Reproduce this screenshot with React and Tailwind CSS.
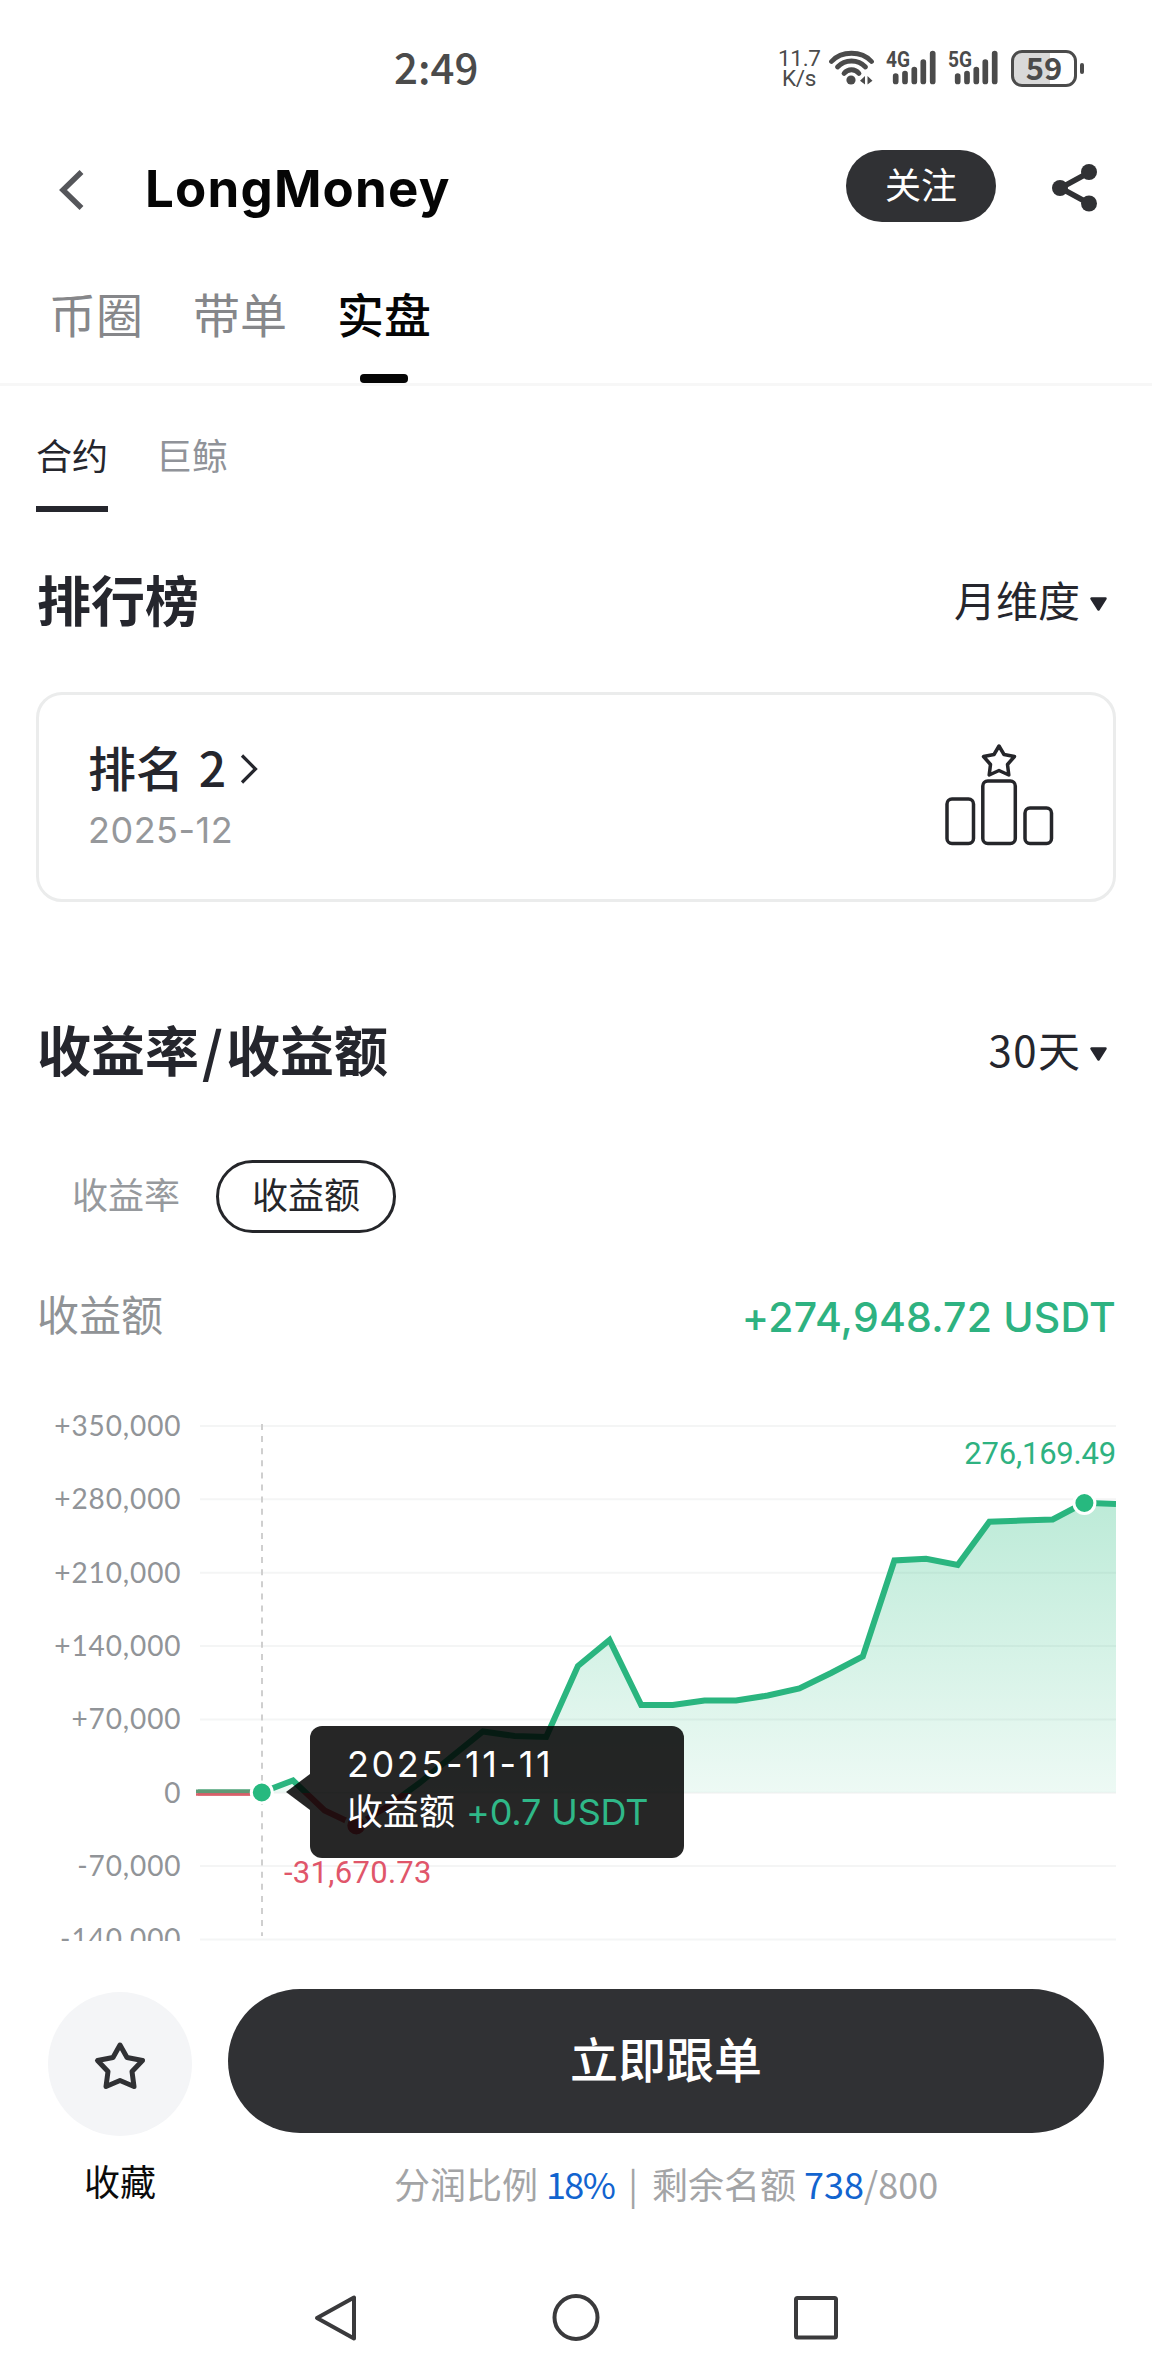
const TABS = ['币圈', '带单', '实盘'];
const SUB_TABS = ['合约', '巨鲸'];

const AXIS_LABELS = ['+350,000', '+280,000', '+210,000', '+140,000', '+70,000', '0', '-70,000', '-140,000'];

// chart geometry, in page pixels
const CHART_LEFT = 198;
const CHART_RIGHT = 1116;
const GRID_TOP = 1426;
const GRID_STEP = 73.35;
const ZERO_Y = 1792.5;

const PROFIT_Y = [
  1792.5, 1792.5, 1792.5, 1780.5, 1810.5, 1825.5, 1806, 1783, 1757, 1731.5,
  1736, 1737, 1666, 1640, 1705, 1705, 1700.5, 1700.5, 1695.5, 1688.5,
  1673, 1656.5, 1560.5, 1558.7, 1565, 1521.7, 1520.6, 1519.5, 1502.8, 1504,
];

const POINTS = PROFIT_Y.map((y, i) => [
  CHART_LEFT + (i * (CHART_RIGHT - CHART_LEFT)) / (PROFIT_Y.length - 1),
  y,
]);

const LINE = POINTS.map(([x, y]) => `${x.toFixed(1)},${y}`).join(' ');
const AREA = `${CHART_LEFT},${ZERO_Y} ${LINE} ${CHART_RIGHT},${ZERO_Y}`;

const CJK = "font-['Noto_Sans_CJK_SC',sans-serif]";

const WifiIcon = () => (
  <svg className="ml-[8px] h-[36px] w-[46px]" viewBox="830 50 46 36" fill="none">
    <g stroke="#4b4b4b" strokeWidth="4.8" strokeLinecap="round">
      <path d="M833.500 61.500C843.500 50.500 863.500 50.500 873.500 61.500" />
      <path d="M839.500 67C847 59 860 59 867.500 67" />
      <path d="M846 73.500C850 68.500 857 68.500 861 73.500" />
    </g>
    <circle cx="853" cy="80" r="4.600" fill="#4b4b4b" />
    <path d="M867 76v8.500l-5-3.800zM869.500 76v8.500l5-3.800z" fill="#4b4b4b" />
  </svg>
);

const SignalIcon = ({ label }) => (
  <svg className="h-[36px] w-[52px] overflow-visible" viewBox="0 0 52 36">
    <text
      x="0"
      y="16.500"
      fontSize="21.500"
      fontWeight="700"
      fill="#4b4b4b"
      textLength="24"
      lengthAdjust="spacingAndGlyphs"
      fontFamily="Roboto, sans-serif"
    >
      {label}
    </text>
    <path
      d="M9.700 26.200v5.200M19 23.600v7.800M28.300 19.600v11.800M37.300 12.200v19.200M46.700 3.600v27.800"
      stroke="#4b4b4b"
      strokeWidth="5.700"
      strokeLinecap="round"
    />
  </svg>
);

const StatusBar = () => (
  <div className="flex h-[136px] items-center text-[#4b4b4b]">
    <span className="ml-[394px] w-[384px] pb-[5px] text-[42px] leading-none font-medium">2:49</span>
    <div className="w-[42px] text-center font-['Roboto',sans-serif] text-[22.5px] leading-[20.5px] tracking-[-0.3px] whitespace-nowrap">
      <div>11.7</div>
      <div>K/s</div>
    </div>
    <WifiIcon />
    <div className="ml-[12px] flex gap-[10px]">
      <SignalIcon label="4G" />
      <SignalIcon label="5G" />
    </div>
    <div className="ml-[11px] flex h-[37px] w-[66px] items-center justify-center rounded-[11px] border-[3px] border-[#4b4b4b] bg-linear-to-r from-[#d9d9d9] from-60% to-white to-60%">
      <span className="pb-[4px] text-[31px] leading-none font-bold">59</span>
    </div>
    <div className="ml-[3px] h-[11px] w-[4px] rounded-full bg-[#4b4b4b]" />
  </div>
);

const Header = () => (
  <div className="flex h-[100px] items-center pr-[54px]">
    <svg className="ml-[55px] mt-[7px] h-[44px] w-[32px]" viewBox="0 0 32 44" fill="none">
      <path d="M26.500 4L8 22l18.500 18" stroke="#55565a" strokeWidth="5.500" />
    </svg>
    <h1 className="ml-[58px] mt-[5px] font-['Inter',sans-serif] text-[51px] leading-none font-bold tracking-[1.2px] text-[#050505]">
      LongMoney
    </h1>
    <button className="ml-auto flex h-[72px] w-[150px] items-center justify-center rounded-full bg-[#303134] pb-[7px] text-[36px] leading-none text-white">
      关注
    </button>
    <svg className="ml-[54px] mt-[3px] h-[50px] w-[48px]" viewBox="0 0 48 50">
      <path d="M39 9.500L10.500 25l28.500 15.500" fill="none" stroke="#303134" strokeWidth="5.500" />
      <circle cx="10" cy="25" r="8" fill="#303134" />
      <circle cx="39" cy="9" r="8" fill="#303134" />
      <circle cx="39" cy="40.500" r="8" fill="#303134" />
    </svg>
  </div>
);

const Tabs = () => (
  <div className="flex h-[150px] gap-[50px] border-b-[3px] border-[#f7f7f7] pt-[53px] pl-[49px]">
    {TABS.map((tab) => (
      <div key={tab} className="flex flex-col items-center">
        <span
          className={
            tab === '实盘'
              ? 'h-[48px] text-[47px] leading-[48px] font-medium text-[#050505]'
              : 'h-[48px] text-[47px] leading-[48px] text-[#86878a]'
          }
        >
          {tab}
        </span>
        {tab === '实盘' && <div className="mt-[37px] h-[9px] w-[48px] rounded-[4px] bg-[#050505]" />}
      </div>
    ))}
  </div>
);

const SubTabs = () => (
  <div className="flex gap-[48px] pt-[50px] text-[36px] leading-none">
    {SUB_TABS.map((tab, i) => (
      <div
        key={tab}
        className={
          i === 0
            ? 'h-[76px] border-b-[6px] border-[#25262d] text-[#25262d]'
            : 'h-[76px] text-[#909399]'
        }
      >
        {tab}
      </div>
    ))}
  </div>
);

const SectionTitle = ({ title, option }) => (
  <div className="flex h-[54px] items-center justify-between text-[#25262d]">
    <h2 className="ml-px text-[54px] leading-none font-bold">{title}</h2>
    <div className="flex items-center pr-[8px]">
      <span className="text-[42px] leading-none">{option}</span>
      <svg className="ml-[9px] mt-[10px] h-[16px] w-[19px]" viewBox="0 0 19 16">
        <path
          d="M2.500 2.500h14L9.500 13.500z"
          fill="#25262d"
          stroke="#25262d"
          strokeWidth="2.500"
          strokeLinejoin="round"
        />
      </svg>
    </div>
  </div>
);

const RankCard = () => (
  <div className="mt-[66px] flex h-[210px] items-center justify-between rounded-[26px] border-[3px] border-[#ebecec] pr-[58px] pl-[49px]">
    <div className="pb-[4px]">
      <div className="flex items-center text-[#25262d]">
        <span className="text-[48px] leading-none font-medium">
          排名 <span className="ml-[4px]">2</span>
        </span>
        <svg className="ml-[12px] mt-[5px] h-[32px] w-[22px]" viewBox="0 0 22 32" fill="none">
          <path d="M4 2.500L17.500 16 4 29.500" stroke="#25262d" strokeWidth="3.200" />
        </svg>
      </div>
      <div className="mt-[22px] font-['Inter',sans-serif] text-[36px] leading-none tracking-[0.5px] text-[#96989b]">
        2025-12
      </div>
    </div>
    <svg className="h-[106px] w-[112px]" viewBox="943 744 112 106" fill="none">
      <g stroke="#25262a" strokeWidth="3.500" strokeLinejoin="round">
        <rect x="947" y="799" width="26.500" height="44.500" rx="5" />
        <rect x="982.800" y="781" width="32.500" height="62.500" rx="5" />
        <rect x="1025" y="808" width="26.500" height="35.500" rx="5" />
        <path d="M999 746l5 8.500 10.500 2-7 8 1.300 10.500-9.800-4.500-9.800 4.500 1.300-10.500-7-8 10.500-2z" />
      </g>
    </svg>
  </div>
);

const ProfitChart = () => (
  <div className="relative h-[607px] overflow-hidden">
    <svg className="block h-[607px] w-[1152px]" viewBox="0 1334 1152 607">
      <defs>
        <linearGradient id="profitFill" gradientUnits="userSpaceOnUse" x1="0" y1="1503" x2="0" y2="1792.500">
          <stop offset="0" stopColor="#22bb7c" stopOpacity="0.3" />
          <stop offset="1" stopColor="#22bb7c" stopOpacity="0.08" />
        </linearGradient>
        <clipPath id="aboveZero">
          <rect x="0" y="1334" width="1116" height="459" />
        </clipPath>
        <clipPath id="belowZero">
          <rect x="0" y="1793" width="1116" height="150" />
        </clipPath>
      </defs>

      {AXIS_LABELS.map((label, i) => (
        <g key={label}>
          <text
            x="181.500"
            y={GRID_TOP + i * GRID_STEP + 10}
            textAnchor="end"
            fontSize="28"
            letterSpacing="0.9"
            fill="#919498"
            fontFamily="Lato, sans-serif"
          >
            {label}
          </text>
          <path d={`M200 ${GRID_TOP + i * GRID_STEP}H1116`} stroke="#f4f5f5" strokeWidth="2" />
        </g>
      ))}

      <path d="M262 1424V1936" stroke="#cfcfcf" strokeWidth="2" strokeDasharray="6 6.100" />

      <polygon points={AREA} fill="url(#profitFill)" clipPath="url(#aboveZero)" />
      <polyline points={LINE} fill="none" stroke="#2ab57f" strokeWidth="6" clipPath="url(#aboveZero)" />
      <polyline points={LINE} fill="none" stroke="#dd5b68" strokeWidth="6" clipPath="url(#belowZero)" />
      <path d="M196 1791.500h56" stroke="#5f9a76" strokeWidth="4" />
      <path d="M196 1794.500h56" stroke="#d95f69" strokeWidth="2.500" />

      <circle cx="261.800" cy="1792.500" r="10.500" fill="#27b97f" stroke="#fff" strokeWidth="3" />
      <circle cx="356.300" cy="1825.500" r="10.500" fill="#dd4a5c" stroke="#fff" strokeWidth="3" />
      <circle cx="1084.400" cy="1503" r="10.500" fill="#27b97f" stroke="#fff" strokeWidth="3" />

      <text
        x="1116"
        y="1464"
        textAnchor="end"
        fontSize="31"
        letterSpacing="-0.200"
        fill="#2eb281"
        fontFamily="Roboto, sans-serif"
      >
        276,169.49
      </text>
      <text x="284" y="1883" fontSize="31" letterSpacing="0.300" fill="#e0566a" fontFamily="Roboto, sans-serif">
        -31,670.73
      </text>
    </svg>

    {/* Tooltip over the selected day */}
    <div className="absolute top-[392px] left-[286px] flex items-center">
      <div className="h-[36px] w-[24px] bg-black/85 [clip-path:polygon(100%_0,100%_100%,0_50%)]" />
      <div className="h-[132px] w-[374px] rounded-[12px] bg-black/85 pt-[20px] pl-[37px] text-[36px] leading-[36px] whitespace-nowrap text-white">
        <div className="font-['Inter',sans-serif] tracking-[2.6px]">2025-11-11</div>
        <div className="mt-[9px]">
          收益额{' '}
          <span className="ml-[3px] font-['Inter',sans-serif] tracking-[-0.2px] text-[#2fb888]">+0.7 USDT</span>
        </div>
      </div>
    </div>
  </div>
);

const FollowBar = () => (
  <div className="flex bg-white px-[48px] pt-[48px]">
    <div className="mt-[3px] flex w-[144px] flex-col items-center">
      <div className="flex h-[144px] w-[144px] items-center justify-center rounded-full bg-[#f4f5f7]">
        <svg className="h-[54px] w-[54px]" viewBox="93 2037 54 54" fill="none">
          <path
            d="M120 2045l7 12.500 15.500 3-10.500 11 2 15-14-6-14 6 2-15-10.500-11 15.500-3z"
            stroke="#303134"
            strokeWidth="5"
            strokeLinejoin="round"
          />
        </svg>
      </div>
      <span className="mt-[26px] text-[36px] leading-none text-[#0c0c0c]">收藏</span>
    </div>
    <div className="ml-[36px] flex w-[876px] flex-col items-center">
      <button className="flex h-[144px] w-full items-center justify-center rounded-full bg-[#303134] pb-[8px] text-[48px] leading-none font-medium text-white">
        立即跟单
      </button>
      <p className="mt-[32px] text-[36px] leading-none whitespace-nowrap text-[#a3a4a6]">
        分润比例 <span className="tracking-[-1.6px] text-[#1264cf]">18%</span>
        <span className="mx-[14px]">|</span>剩余名额{' '}
        <span className="text-[#1264cf]">738</span>/800
      </p>
    </div>
  </div>
);

const NavBar = () => (
  <div className="mt-[92px] flex justify-center gap-[192px]">
    <svg className="h-[50px] w-[48px]" viewBox="0 0 48 50" fill="none">
      <path d="M42 4.500v41L5 25z" stroke="#3a3a3c" strokeWidth="4" strokeLinejoin="round" />
    </svg>
    <svg className="h-[50px] w-[48px]" viewBox="0 0 48 50" fill="none">
      <circle cx="24" cy="24.500" r="21.500" stroke="#3a3a3c" strokeWidth="4" />
    </svg>
    <svg className="h-[50px] w-[48px]" viewBox="0 0 48 50" fill="none">
      <rect x="4" y="5" width="40" height="39.500" rx="1.500" stroke="#3a3a3c" strokeWidth="4" />
    </svg>
  </div>
);

export default function App() {
  return (
    <div className={`h-[2376px] w-[1152px] overflow-hidden bg-white ${CJK}`}>
      <StatusBar />
      <Header />
      <Tabs />
      <div className="px-[36px]">
        <SubTabs />
        <div className="mt-[60px]">
          <SectionTitle title="排行榜" option="月维度" />
        </div>
        <RankCard />
        <div className="mt-[120px]">
          <SectionTitle
            title={
              <>
                收益率<span className="mx-[3px]">/</span>收益额
              </>
            }
            option={
              <>
                <span className="tracking-[1.4px]">30</span>天
              </>
            }
          />
        </div>
        <div className="mt-[84px] flex text-[36px] leading-none">
          <button className="h-[73px] w-[180px] pb-[7px] text-center text-[#96999d]">收益率</button>
          <button className="h-[73px] w-[180px] rounded-full border-[3px] border-[#25262a] pb-[7px] text-center text-[#25262a]">
            收益额
          </button>
        </div>
        <div className="mt-[59px] flex h-[42px] items-center justify-between text-[42px] leading-none">
          <span className="ml-px text-[#909396]">收益额</span>
          <span className="mt-[8px] font-['Inter',sans-serif] text-[41px] font-medium tracking-[0.2px] text-[#2eb281]">
            +274,948.72 USDT
          </span>
        </div>
      </div>
      <ProfitChart />
      <FollowBar />
      <NavBar />
    </div>
  );
}
